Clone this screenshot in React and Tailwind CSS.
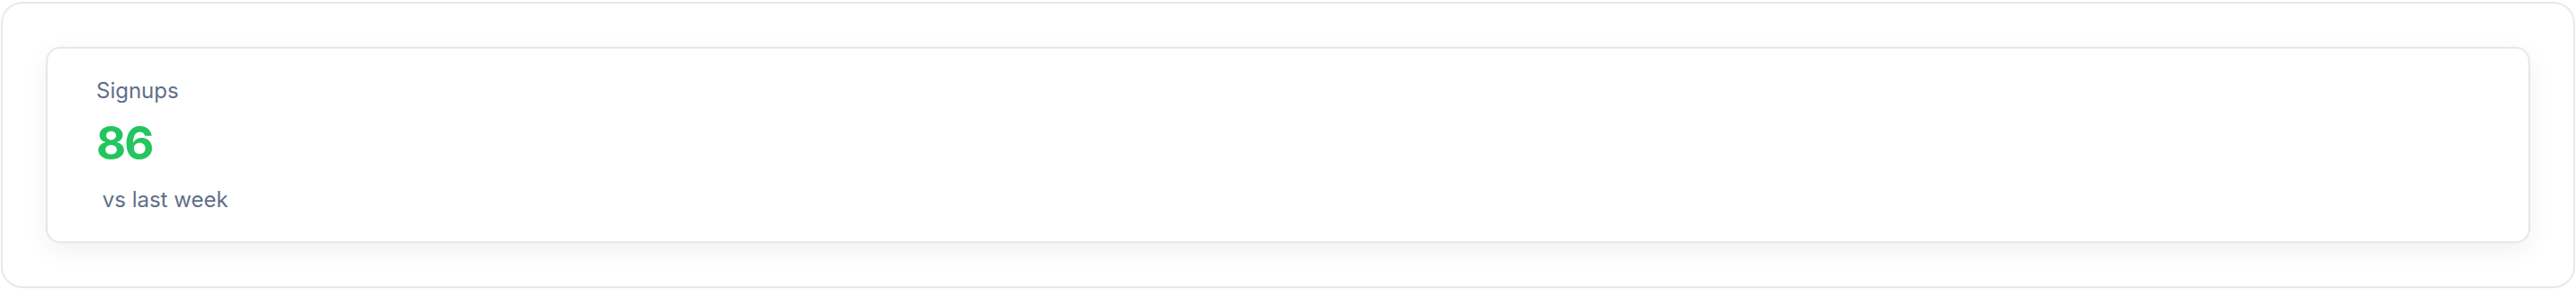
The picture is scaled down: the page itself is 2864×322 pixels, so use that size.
import React from 'react';

function StatCard({ label, value, change }) {
  return (
    <div className="rounded-2xl border-2 border-[#e6e7ec] bg-white pt-[31px] pb-[30px] pl-[54px] shadow-[0_8px_28px_rgba(15,23,42,0.06)]">
      <p className="text-[24px] leading-[32px] text-[#5f6f89]">{label}</p>
      <p className="mt-[16px] text-[51px] leading-[51px] font-bold tracking-[-2px] text-[#22c55e]">{value}</p>
      <p className="mt-[22px] text-[24px] leading-[32px] text-[#5f6f89] whitespace-pre">
        <span>{change}</span>{' vs last week'}
      </p>
    </div>
  );
}

export default function App() {
  return (
    <div className="w-full bg-white pt-[2px] px-[1px] pb-[1px]" style={{ fontFamily: 'Inter, "Noto Sans", sans-serif' }}>
      <div className="rounded-3xl border-2 border-[#e8e8ee] bg-white p-12">
        <StatCard label="Signups" value="86" change="" />
      </div>
    </div>
  );
}
